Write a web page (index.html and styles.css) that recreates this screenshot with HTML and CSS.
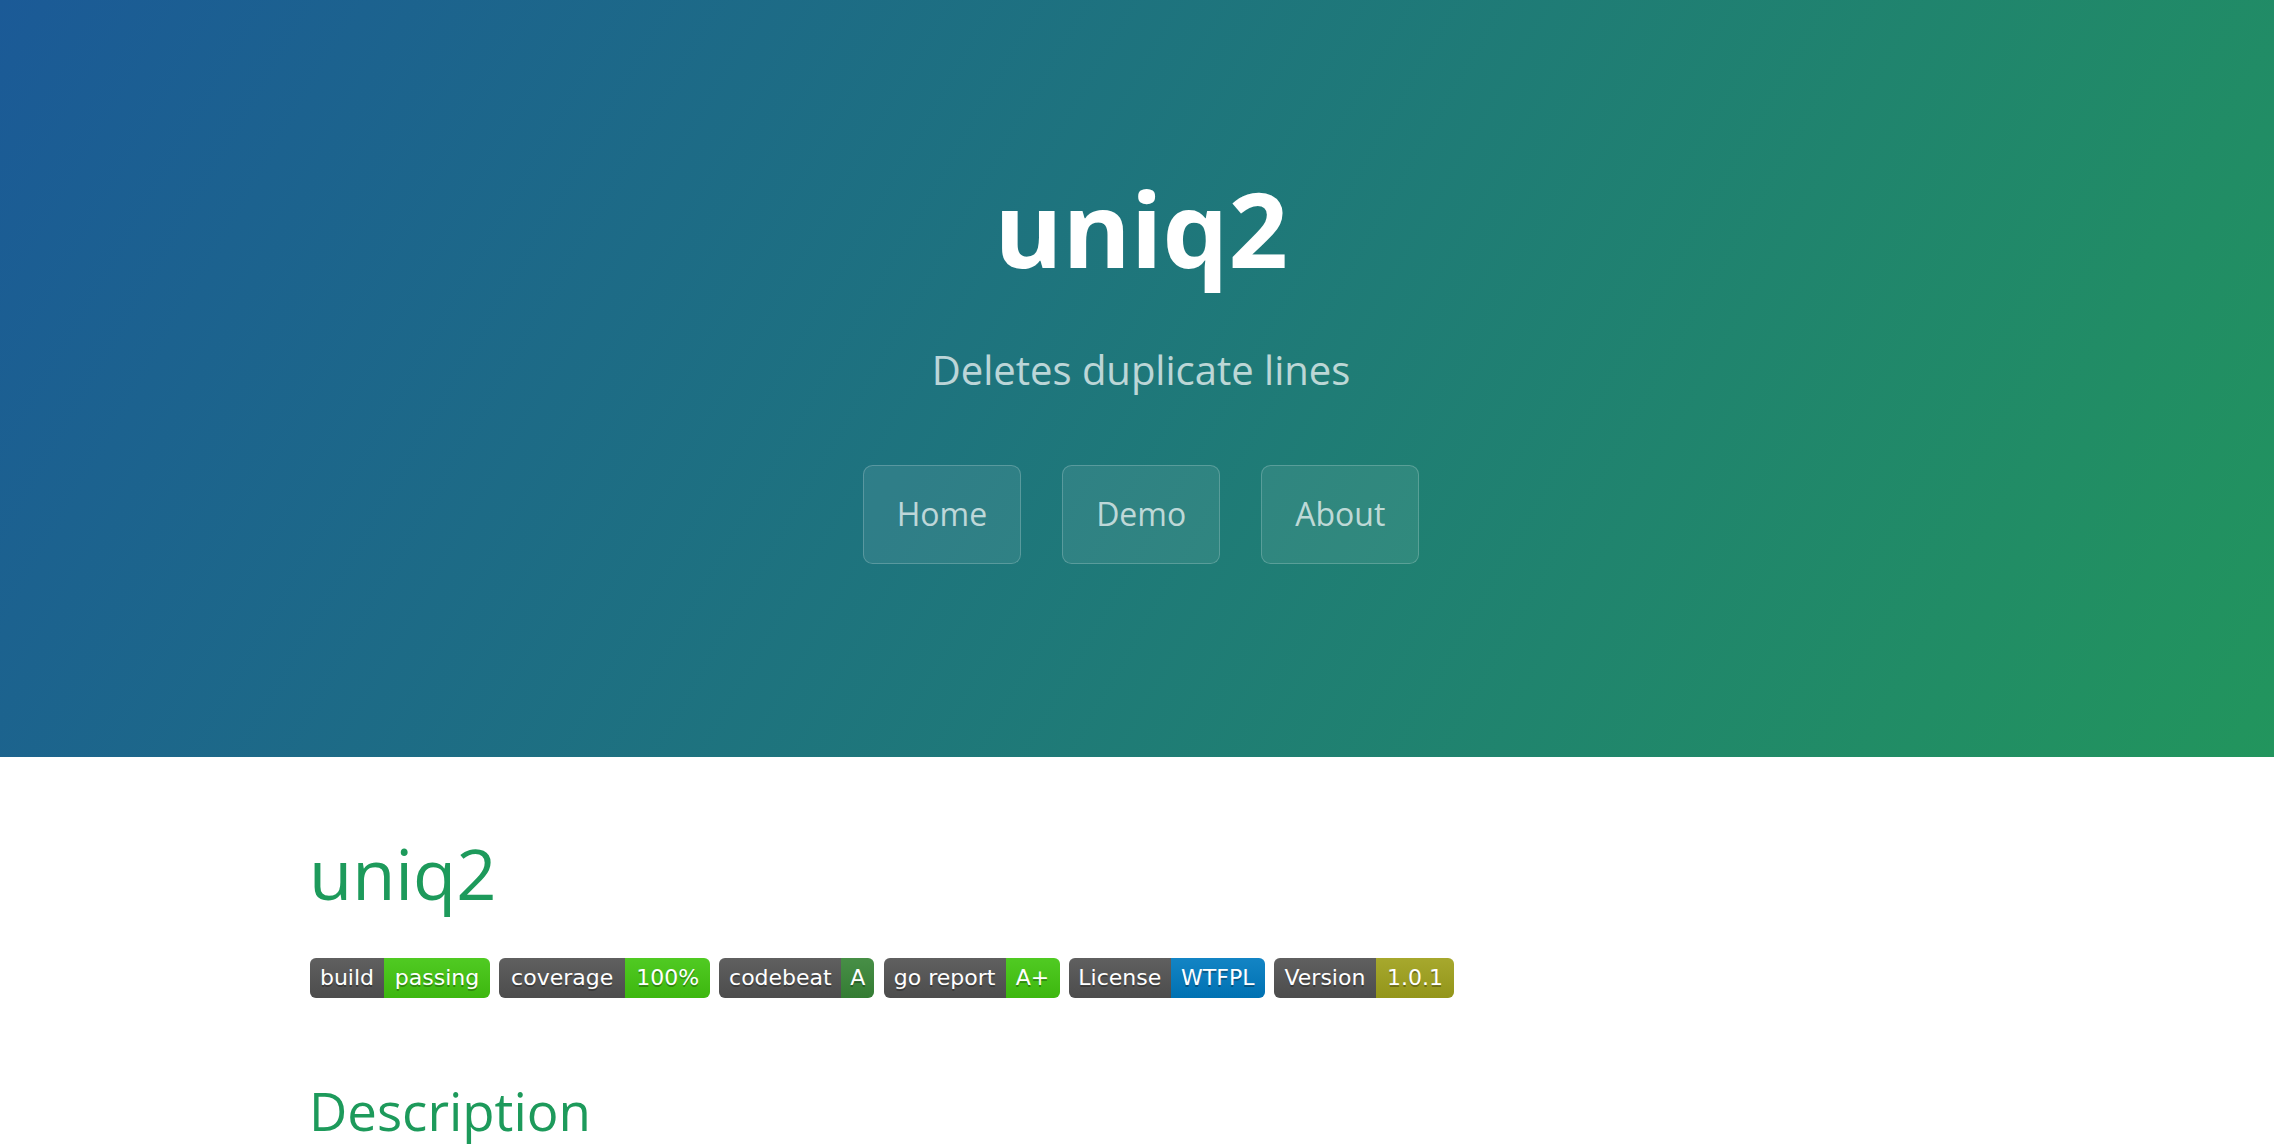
FILE: index.html
```html
<!DOCTYPE html>
<html lang="en">
<head>
<meta charset="utf-8">
<title>uniq2</title>
<link rel="stylesheet" href="styles.css">
</head>
<body>
<header class="page-header">
  <h1 class="project-name">uniq2</h1>
  <h2 class="project-tagline">Deletes duplicate lines</h2>
  <nav class="nav">
    <a class="btn" href="#">Home</a>
    <a class="btn" href="#">Demo</a>
    <a class="btn" href="#">About</a>
  </nav>
</header>
<div class="wrap">
  <main class="main-content">
    <h1 class="title">uniq2</h1>
    <div class="badges">
      <a class="badge" href="#"><span class="l w-build">build</span><span class="r w-passing green">passing</span></a>
      <a class="badge" href="#"><span class="l w-coverage">coverage</span><span class="r w-100 green">100%</span></a>
      <a class="badge" href="#"><span class="l w-codebeat">codebeat</span><span class="r w-a dkgreen">A</span></a>
      <a class="badge" href="#"><span class="l w-goreport">go report</span><span class="r w-aplus green">A+</span></a>
      <a class="badge" href="#"><span class="l w-license">License</span><span class="r w-wtfpl blue">WTFPL</span></a>
      <a class="badge" href="#"><span class="l w-version">Version</span><span class="r w-ver yellow">1.0.1</span></a>
    </div>
    <h2 class="section">Description</h2>
  </main>
</div>
</body>
</html>
```

FILE: styles.css
```css
* { box-sizing: border-box; }
html, body { margin: 0; padding: 0; }
body {
  font-family: "Open Sans", "Helvetica Neue", Arial, sans-serif;
  color: #606c71;
  background: #fff;
  overflow: hidden;
}
.page-header {
  color: #fff;
  text-align: center;
  background-color: #1f7a70;
  background-image: linear-gradient(120deg, #1b5a97, #22955d);
  padding: 150px 192px 161px 200px;
}
.project-name {
  margin: 0;
  font-size: 104px;
  line-height: 156px;
  font-weight: 700;
}
.project-tagline {
  margin: 34px 0 0;
  font-size: 40px;
  line-height: 60px;
  font-weight: 400;
  opacity: 0.7;
}
.nav {
  margin-top: 64.5px;
  margin-bottom: 32px;
  display: flex;
  justify-content: center;
  gap: 41px;
}
.btn {
  display: inline-block;
  color: rgba(255, 255, 255, 0.7);
  text-decoration: none;
  background-color: rgba(255, 255, 255, 0.08);
  border: 1px solid rgba(255, 255, 255, 0.2);
  border-radius: 9.6px;
  padding: 24.5px 33px;
  font-size: 32px;
  line-height: 48px;
}
.wrap { padding-left: 8px; }
.main-content {
  max-width: 2048px;
  margin: 0 auto;
  padding: 64px 192px;
  font-size: 35.2px;
  line-height: 1.5;
}
.title {
  margin: 0 0 32px;
  font-size: 70.4px;
  line-height: 105.6px;
  font-weight: 400;
  color: #1d9a5b;
}
.badges {
  display: flex;
  align-items: flex-start;
  gap: 9.2px;
  height: 52.8px;
  margin: 0 0 32px;
  padding-left: 1px;
}
.badge {
  display: flex;
  height: 40px;
  border-radius: 6px;
  overflow: hidden;
  text-decoration: none;
  font-family: "DejaVu Sans", Verdana, sans-serif;
  font-size: 22px;
  line-height: 40px;
  color: #fff;
  text-shadow: 0 2px 0 rgba(1, 1, 1, 0.3);
}
.badge span {
  display: block;
  height: 40px;
  text-align: center;
  white-space: nowrap;
  background-image: linear-gradient(rgba(187, 187, 187, 0.1), rgba(0, 0, 0, 0.1));
}
.l { background-color: #555; }
.green { background-color: #4c1; }
.dkgreen { background-color: #3a8a39; }
.blue { background-color: #007ec6; }
.yellow { background-color: #a4a61d; }
.w-build { width: 74px; }
.w-passing { width: 106px; }
.w-coverage { width: 126px; }
.w-100 { width: 85px; }
.w-codebeat { width: 122px; }
.w-a { width: 33px; }
.w-goreport { width: 122px; }
.w-aplus { width: 54px; }
.w-license { width: 102px; }
.w-wtfpl { width: 94px; }
.w-version { width: 102px; }
.w-ver { width: 78px; }
.section {
  margin: 60px 0 0;
  font-size: 52.8px;
  line-height: 79.2px;
  font-weight: 400;
  color: #1d9a5b;
}
```
